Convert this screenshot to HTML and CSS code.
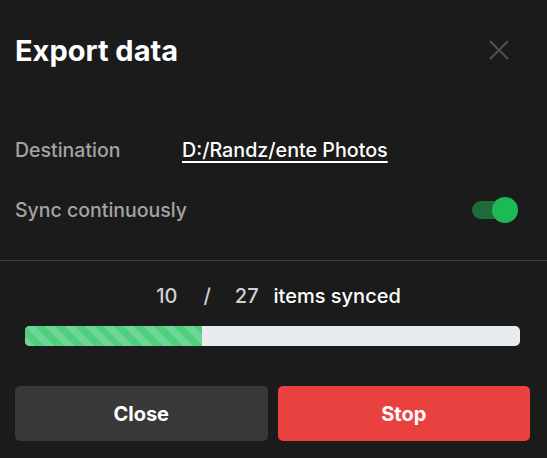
FILE: index.html
```html
<!DOCTYPE html>
<html lang="en">
<head>
<meta charset="utf-8">
<title>Export data</title>
<link rel="stylesheet" href="styles.css">
</head>
<body>
<div class="dialog">
  <header class="header">
    <h2 class="title">Export data</h2>
    <button class="close-btn" aria-label="Close">
      <svg width="20" height="20" viewBox="0 0 20 20"><path d="M1 1 L19 19 M19 1 L1 19" stroke="currentColor" stroke-width="2.2" fill="none"/></svg>
    </button>
  </header>
  <section class="settings">
    <div class="row">
      <span class="label">Destination</span>
      <span class="path">D:/Randz/ente Photos</span>
    </div>
    <div class="row">
      <span class="label">Sync continuously</span>
      <span class="switch"><span class="track"></span><span class="thumb"></span></span>
    </div>
  </section>
  <hr class="divider">
  <section class="progress">
    <div class="counter">
      <span class="num">10</span>
      <span class="num slash">/</span>
      <span class="num">27</span>
      <span class="word">items synced</span>
    </div>
    <div class="bar"><div class="fill" style="width:35.8%"></div></div>
  </section>
  <footer class="actions">
    <button class="btn btn-secondary">Close</button>
    <button class="btn btn-danger">Stop</button>
  </footer>
</div>
</body>
</html>
```

FILE: styles.css
```css
* { box-sizing: border-box; }
html, body {
  margin: 0;
  padding: 0;
  background: #1b1b1b;
}
body {
  font-family: Inter, "Noto Sans", sans-serif;
  color: #fff;
}
.dialog {
  width: 547px;
  height: 458px;
  background: #1b1b1b;
  display: flex;
  flex-direction: column;
}
.header {
  height: 100px;
  display: flex;
  align-items: center;
  justify-content: space-between;
  padding: 0 38px 0 15px;
}
.title {
  margin: 0;
  font-size: 29px;
  line-height: 29px;
  font-weight: 700;
  color: #fff;
}
.close-btn {
  background: none;
  border: 0;
  padding: 0;
  width: 20px;
  height: 20px;
  color: #4f4f4f;
  display: flex;
}
.settings {
  padding: 20px 29px 20px 15px;
}
.row {
  height: 60px;
  display: flex;
  align-items: center;
}
.label {
  font-size: 19.5px;
  font-weight: 500;
  color: #a3a3a3;
  min-width: 167px;
  white-space: nowrap;
}
.path {
  font-size: 19.7px;
  font-weight: 500;
  color: #fff;
  text-decoration: underline;
  text-decoration-thickness: 2px;
  text-underline-offset: 4px;
  white-space: nowrap;
}
.switch {
  margin-left: auto;
  position: relative;
  width: 46px;
  height: 26px;
  display: block;
  flex: none;
}
.track {
  position: absolute;
  left: 0;
  top: 4px;
  width: 42px;
  height: 18px;
  border-radius: 9px;
  background: #1f6b3a;
}
.thumb {
  position: absolute;
  right: 0;
  top: 0;
  width: 26px;
  height: 26px;
  border-radius: 50%;
  background: #1db954;
}
.divider {
  margin: 0;
  border: 0;
  height: 1px;
  background: #3a3a3a;
}
.progress {
  padding: 22px 27px 0 25px;
}
.counter {
  height: 26px;
  display: flex;
  justify-content: center;
  align-items: center;
  font-size: 20px;
  font-weight: 500;
  padding-left: 12px;
}
.num { color: #d0d0d0; }
.slash { margin: 0 24px 0 26px; }
.word { color: #fff; margin-left: 15px; }
.bar {
  margin-top: 17px;
  height: 20px;
  border-radius: 5px;
  background: #e8ebee;
  overflow: hidden;
}
.fill {
  height: 100%;
  background-color: #51cf7d;
  background-image: repeating-linear-gradient(45deg,
    #6ed698 0, #6ed698 7px, #51cf7d 7px, #51cf7d 14px);
}
.actions {
  margin-top: 40px;
  padding: 0 17px 0 15px;
  display: flex;
  gap: 10px;
}
.btn {
  flex: 1;
  height: 55px;
  border: 0;
  border-radius: 5px;
  font-family: Inter, "Noto Sans", sans-serif;
  font-size: 20px;
  font-weight: 700;
  color: #fff;
}
.btn-secondary { background: #383838; }
.btn-danger { background: #e94040; }
```
